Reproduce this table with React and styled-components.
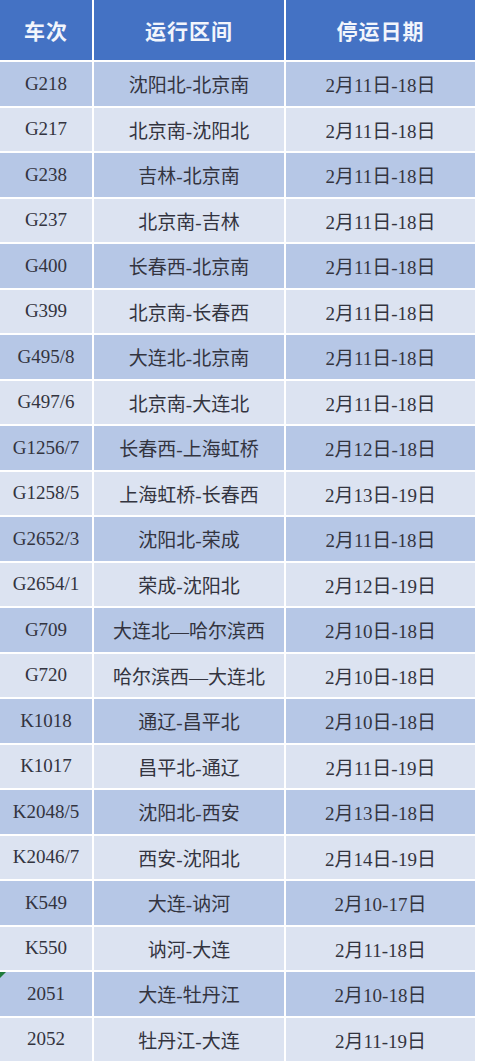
import React from 'react';
import styled, { createGlobalStyle } from 'styled-components';

const GlobalStyle = createGlobalStyle`
  html, body {
    margin: 0;
    padding: 0;
    background: #ffffff;
  }
`;

const Table = styled.div`
  display: grid;
  grid-template-columns: 92px 190px 189px;
  grid-template-rows: 60px repeat(22, 43.5px);
  gap: 2px;
  padding-right: 2px;
  width: 477px;
  box-sizing: border-box;
  background: #ffffff;
`;

const HeadCell = styled.div`
  display: flex;
  align-items: center;
  justify-content: center;
  background: #4472c4;
  color: #f2f5fc;
  font-family: "Noto Sans CJK SC", "Liberation Serif", serif;
  font-weight: 700;
  font-size: 21px;
  letter-spacing: 1px;
`;

const Cell = styled.div`
  position: relative;
  display: flex;
  align-items: center;
  justify-content: center;
  background: ${(p) => (p.$dark ? '#b6c7e6' : '#dce3f1')};
  color: #33343f;
  font-family: "Liberation Serif", "Noto Sans CJK SC", serif;
  font-size: 19px;
  white-space: nowrap;
`;

const Marker = styled.span`
  position: absolute;
  top: 0;
  left: 0;
  width: 0;
  height: 0;
  border-top: 6px solid #1f7a3a;
  border-right: 6px solid transparent;
`;

const rows = [
  ['G218', '沈阳北-北京南', '2月11日-18日'],
  ['G217', '北京南-沈阳北', '2月11日-18日'],
  ['G238', '吉林-北京南', '2月11日-18日'],
  ['G237', '北京南-吉林', '2月11日-18日'],
  ['G400', '长春西-北京南', '2月11日-18日'],
  ['G399', '北京南-长春西', '2月11日-18日'],
  ['G495/8', '大连北-北京南', '2月11日-18日'],
  ['G497/6', '北京南-大连北', '2月11日-18日'],
  ['G1256/7', '长春西-上海虹桥', '2月12日-18日'],
  ['G1258/5', '上海虹桥-长春西', '2月13日-19日'],
  ['G2652/3', '沈阳北-荣成', '2月11日-18日'],
  ['G2654/1', '荣成-沈阳北', '2月12日-19日'],
  ['G709', '大连北—哈尔滨西', '2月10日-18日'],
  ['G720', '哈尔滨西—大连北', '2月10日-18日'],
  ['K1018', '通辽-昌平北', '2月10日-18日'],
  ['K1017', '昌平北-通辽', '2月11日-19日'],
  ['K2048/5', '沈阳北-西安', '2月13日-18日'],
  ['K2046/7', '西安-沈阳北', '2月14日-19日'],
  ['K549', '大连-讷河', '2月10-17日'],
  ['K550', '讷河-大连', '2月11-18日'],
  ['2051', '大连-牡丹江', '2月10-18日'],
  ['2052', '牡丹江-大连', '2月11-19日'],
];

export default function App() {
  return (
    <>
      <GlobalStyle />
      <Table>
        <HeadCell>车次</HeadCell>
        <HeadCell>运行区间</HeadCell>
        <HeadCell>停运日期</HeadCell>
        {rows.map((r, i) => (
          <React.Fragment key={r[0]}>
            <Cell $dark={i % 2 === 0}>
              {r[0] === '2051' && <Marker />}
              {r[0]}
            </Cell>
            <Cell $dark={i % 2 === 0}>{r[1]}</Cell>
            <Cell $dark={i % 2 === 0}>{r[2]}</Cell>
          </React.Fragment>
        ))}
      </Table>
    </>
  );
}
